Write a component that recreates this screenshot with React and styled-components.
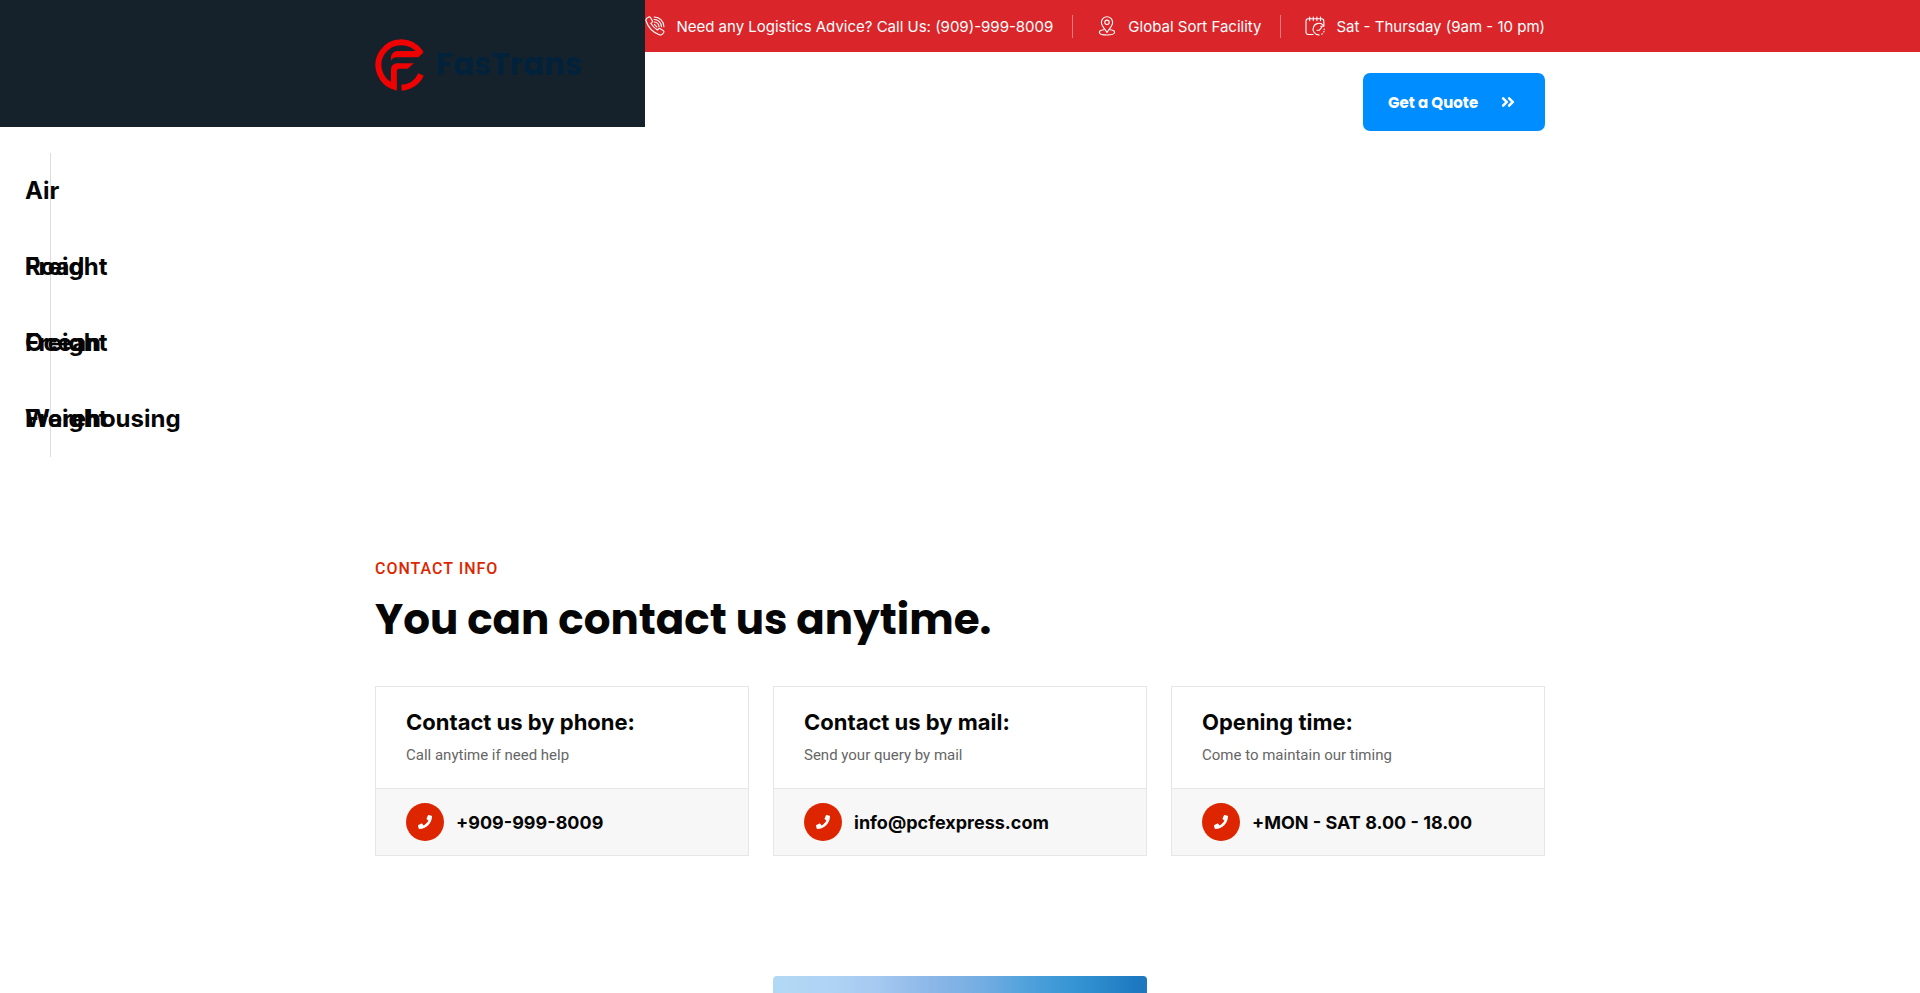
import React from 'react'

import styled, { createGlobalStyle } from 'styled-components'
import { FaPhone, FaAngleDoubleRight } from 'react-icons/fa'

const services = ['Air Freight', 'Road Freight', 'Ocean Freight', 'Warehousing']

const contacts = [
  { title: 'Contact us by phone:', text: 'Call anytime if need help', value: '+909-999-8009', href: 'tel:9099998009' },
  { title: 'Contact us by mail:', text: 'Send your query by mail', value: 'info@pcfexpress.com', href: 'mailto:info@pcfexpress.com' },
  { title: 'Opening time:', text: 'Come to maintain our timing', value: '+MON - SAT 8.00 - 18.00', href: '#hours' },
]

function LogoMark() {
  return (
    <svg width="49" height="52" viewBox="0 0 148 157" aria-hidden="true">
      <g fill="none" stroke="#ee0202" strokeWidth="18">
        <path d="M138 42A69 69 0 1 0 65 146" />
        <path d="M80 147A69 69 0 0 0 139 107" />
      </g>
      <g fill="#ee0202">
        <path d="M147 40L131 55H66Q52 55 48 66V56Q50 37 68 36H130Z" />
        <path d="M117 73L99 90H73Q66 90 66 98V156L48 149V93Q49 74 67 73Z" />
      </g>
    </svg>
  )
}

function CallIcon() {
  return (
    <LineIcon viewBox="0 0 20 20" aria-hidden="true">
      <path d="M1.6 2.4L3.8 1Q4.8.6 5.4 1.5L7.3 4.6Q7.8 5.6 7 6.3L5.8 7.3Q8.3 11.4 12.4 14L13.6 12.8Q14.3 12.1 15.2 12.7L18.3 14.6Q19.2 15.2 18.8 16.2L17.4 18.2Q16.4 19.3 14.8 18.9Q4.5 15.4 1.1 5Q.6 3.4 1.6 2.4Z" />
      <path d="M9.2 1A9.6 9.6 0 0 1 18.9 10.8M9.2 3.5A7.1 7.1 0 0 1 16.4 10.8M9.2 6A4.7 4.7 0 0 1 14 10.8M9.4 8.4L11.8 10.8" />
    </LineIcon>
  )
}

function PinIcon() {
  return (
    <LineIcon viewBox="0 0 20 20" aria-hidden="true">
      <path d="M10 16.5C8.4 13.5 4.4 9.9 4.4 6.4A5.6 5.6 0 0 1 15.6 6.4C15.6 9.9 11.6 13.5 10 16.5Z" />
      <circle cx="10" cy="6.3" r="2.2" />
      <path d="M6.7 13.8C4.2 14.1 2.4 15 2.4 16.2C2.4 17.8 5.8 19 10 19S17.6 17.8 17.6 16.2C17.6 15 15.8 14.1 13.3 13.8" />
    </LineIcon>
  )
}

function ScheduleIcon() {
  return (
    <LineIcon viewBox="0 0 20 20" aria-hidden="true">
      <path d="M8 18.5H3.4Q1 18.5 1 16.1V5Q1 2.8 3.2 2.8H16.4Q18.8 2.8 18.8 5V6.4" />
      <path d="M4.7 1V4.6M8.3 1V4.6M11.9 1V4.6M15.5 1V4.6" />
      <path d="M18.4 9.5A5.8 5.8 0 1 0 14 18.9M18.9 7V10.2H15.8M12 14.2H14.3L16.7 11.4" />
      <path d="M16.8 18.1L17.4 17.7M18.8 16L19 15.3M19.2 13.4V13" />
    </LineIcon>
  )
}

function Header() {
  return (
    <HeaderGrid>
      <Brand href="#home">
        <LogoMark />
        <BrandName>FasTrans</BrandName>
      </Brand>
      <div>
        <TopBar>
          <TopItem><CallIcon />Need any Logistics Advice? Call Us: (909)-999-8009</TopItem>
          <TopItem><PinIcon />Global Sort Facility</TopItem>
          <TopItem><ScheduleIcon />Sat - Thursday (9am - 10 pm)</TopItem>
        </TopBar>
        <NavRow>
          <QuoteLink href="#quote">Get a Quote <FaAngleDoubleRight size={16} /></QuoteLink>
        </NavRow>
      </div>
    </HeaderGrid>
  )
}

function App() {
  return (
    <>
      <GlobalStyle />
      <Header />
      <ServiceMenu>
        {services.map((name) => (
          <ServiceItem key={name}><a href="#service">{name}</a></ServiceItem>
        ))}
      </ServiceMenu>
      <ContactSection>
        <Label>Contact Info</Label>
        <Title>You can contact us anytime.</Title>
        <Cards>
          {contacts.map((c) => (
            <Card key={c.title}>
              <CardHead>
                <h3>{c.title}</h3>
                <p>{c.text}</p>
              </CardHead>
              <CardFoot>
                <IconCircle><FaPhone size={14} /></IconCircle>
                <a href={c.href}>{c.value}</a>
              </CardFoot>
            </Card>
          ))}
        </Cards>
        <Cards>
          <Photo />
        </Cards>
      </ContactSection>
    </>
  )
}

export default App

const GlobalStyle = createGlobalStyle`
  *{
    box-sizing: border-box;
  }
  body{
    margin: 0;
    background-color: #fff;
    color: #060606;
    font-family: Inter, sans-serif;
  }
  h2, h3, p, ul{
    margin: 0;
    padding: 0;
  }
  a{
    color: inherit;
    text-decoration: none;
  }
`

const HeaderGrid = styled.header`
  display: grid;
  grid-template-columns: calc(50% - 315px) minmax(0, 1fr);
  align-items: start;
`

const Brand = styled.a`
  display: flex;
  align-items: center;
  gap: 12px;
  height: 127px;
  padding-top: 2px;
  padding-left: calc(50vw - 585px);
  background-color: #16222b;
`

const BrandName = styled.span`
  color: #02223c;
  font-family: Poppins, Inter, sans-serif;
  font-size: 31px;
  font-weight: 700;
`

const TopBar = styled.ul`
  display: flex;
  justify-content: flex-end;
  align-items: center;
  height: 52px;
  padding-right: calc(50vw - 585px);
  background-color: #da262b;
  list-style: none;
`

const TopItem = styled.li`
  display: flex;
  align-items: center;
  gap: 11px;
  height: 23px;
  color: #fff;
  font-size: 15px;
  white-space: nowrap;
  & + &{
    margin-left: 19px;
    padding-left: 24px;
    border-left: 1px solid #e8787b;
  }
`

const LineIcon = styled.svg`
  width: 20px;
  height: 20px;
  fill: none;
  stroke: #fff;
  stroke-width: 1.1;
  stroke-linecap: round;
  stroke-linejoin: round;
`

const NavRow = styled.nav`
  display: flex;
  justify-content: flex-end;
  padding-top: 21px;
  padding-right: calc(50vw - 585px);
`

const QuoteLink = styled.a`
  display: flex;
  align-items: center;
  justify-content: space-between;
  width: 182px;
  height: 58px;
  padding: 0 29px 0 25px;
  border-radius: 7px;
  background-color: #008dff;
  color: #fff;
  font-family: Poppins, Inter, sans-serif;
  font-size: 15px;
  font-weight: 700;
`

const ServiceMenu = styled.ul`
  width: 51px;
  margin-top: 22px;
  border-right: 1px solid #ddd;
  list-style: none;
`

/* each row holds one line, longer names spill onto the row below */
const ServiceItem = styled.li`
  height: 76px;
  padding-left: 25px;
  font-size: 24px;
  font-weight: 700;
  line-height: 76px;
`

const ContactSection = styled.section`
  max-width: 1170px;
  margin: 0 auto;
  padding-top: 99px;
`

const Label = styled.p`
  color: #dd2600;
  font-family: Roboto, sans-serif;
  font-size: 16px;
  font-weight: 500;
  line-height: 26px;
  letter-spacing: 1px;
  text-transform: uppercase;
`

const Title = styled.h2`
  margin: 8px 0 36px;
  font-family: Poppins, Inter, sans-serif;
  font-size: 42px;
  font-weight: 700;
  line-height: 60px;
`

const Cards = styled.div`
  display: grid;
  grid-template-columns: repeat(3, 1fr);
  gap: 24px;
  & + &{
    margin-top: 120px;
  }
`

const Card = styled.article`
  border: 1px solid #e6e6e6;
`

const CardHead = styled.div`
  height: 101px;
  padding: 19px 30px;
  h3{
    font-size: 22px;
    font-weight: 700;
    line-height: 32px;
  }
  p{
    margin-top: 5px;
    color: #666;
    font-family: Roboto, sans-serif;
    font-size: 15px;
    line-height: 24px;
  }
`

const CardFoot = styled.div`
  display: flex;
  align-items: center;
  gap: 12px;
  height: 67px;
  padding: 0 30px;
  border-top: 1px solid #e6e6e6;
  background-color: #f7f7f7;
  font-size: 18px;
  font-weight: 700;
`

const IconCircle = styled.span`
  display: flex;
  align-items: center;
  justify-content: center;
  width: 38px;
  height: 38px;
  border-radius: 50%;
  background-color: #dd2600;
  color: #fff;
`

const Photo = styled.div`
  grid-column: 2;
  height: 240px;
  border-radius: 4px;
  background: linear-gradient(90deg, #b2d9f4 0%, #afd3f4 16%, #a5c9f0 28%, #8cb7e8 42%, #74ade2 56%, #50a1dc 68%, #3293d2 82%, #1d78bf 98%);
`
